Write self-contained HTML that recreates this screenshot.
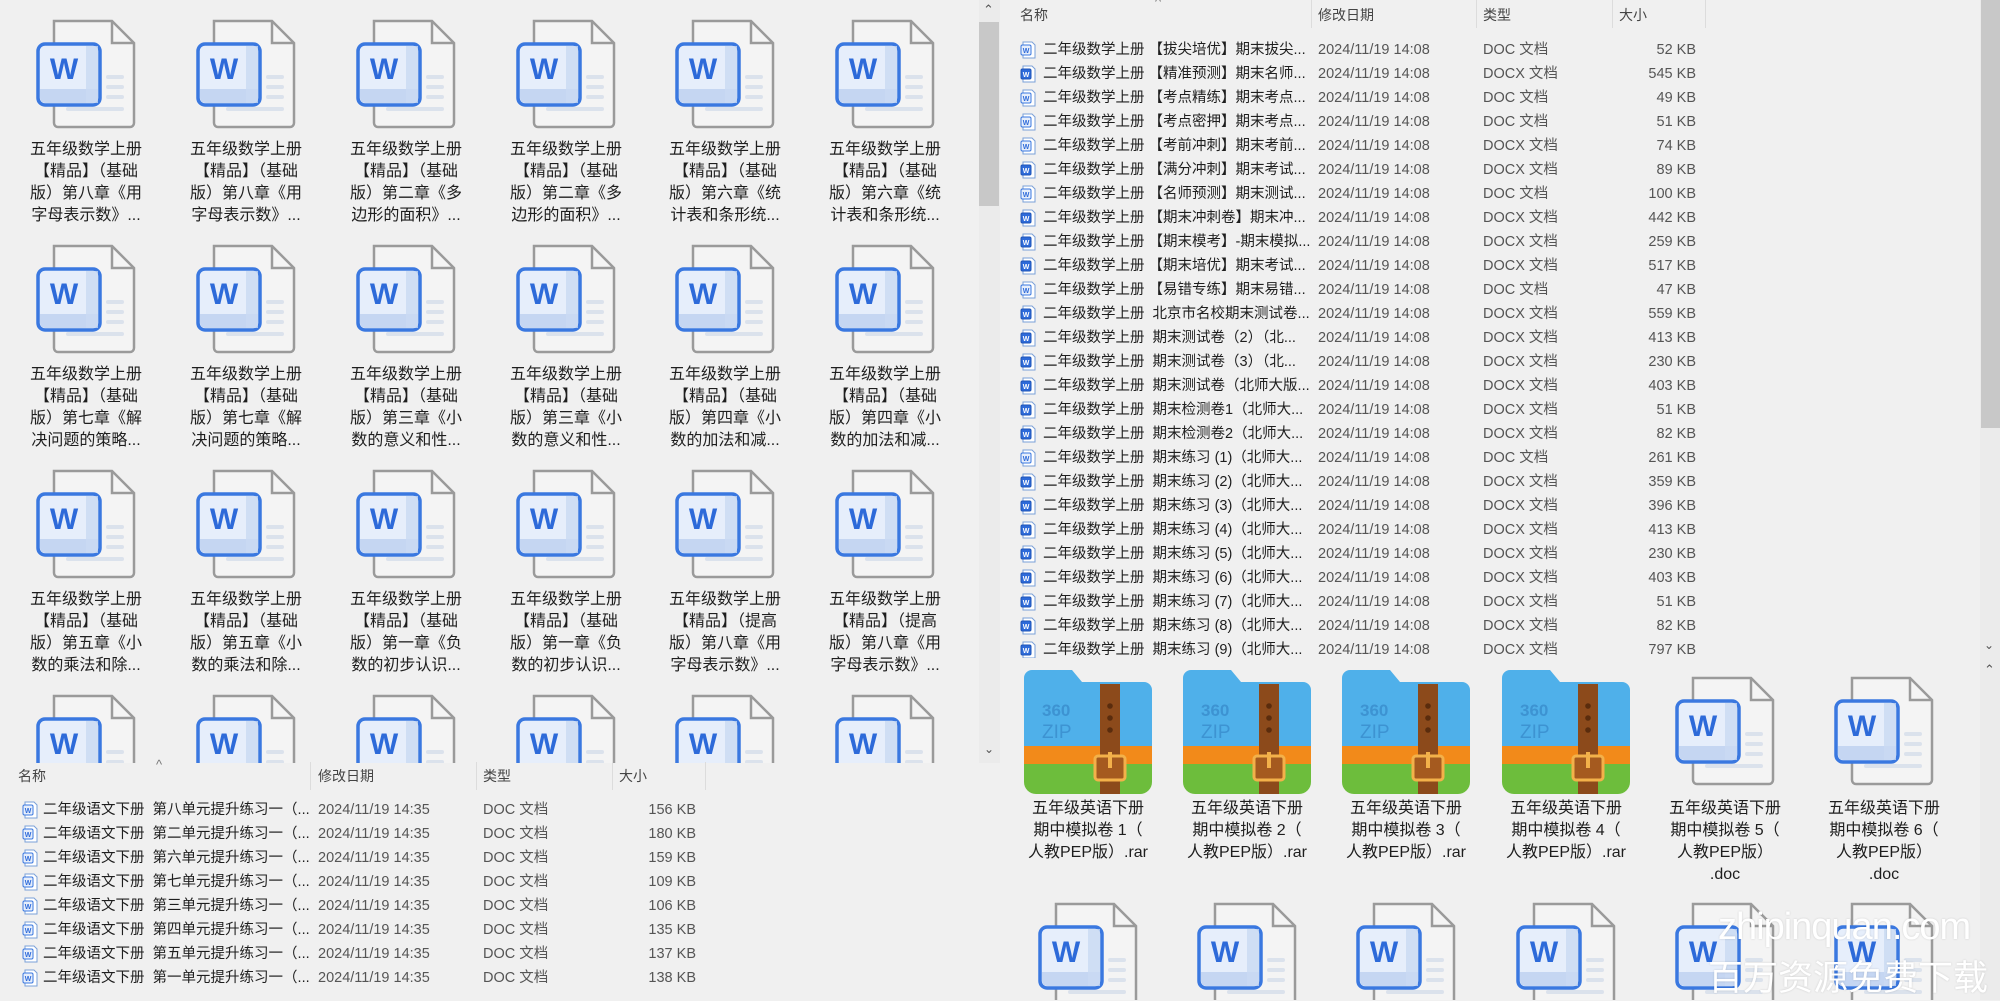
<!DOCTYPE html>
<html><head><meta charset="utf-8"><style>
*{margin:0;padding:0;box-sizing:border-box}
body{width:2000px;height:1000px;overflow:hidden;background:#f0f0f0;position:relative;font-family:"Liberation Sans","Noto Sans CJK SC",sans-serif;color:#1e1e1e}
.a{position:absolute}
.it{position:absolute;width:160px;text-align:center;font-size:16px;line-height:22px;color:#1e1e1e}
.it svg{display:block;margin:0 auto 10px auto}
.hdr{position:absolute;height:28px;font-size:14px;color:#444;line-height:28px}
.sep{position:absolute;top:0;width:1px;height:28px;background:#dcdcdc}
.row{position:absolute;height:24px;font-size:14.5px;line-height:24px;white-space:nowrap}
.row span{position:absolute;top:0}
.row .sz{text-align:right;width:80px}
.ic{position:absolute;top:3px;width:16px;height:18px}
.g{color:#555}
</style></head><body>
<svg width="0" height="0" style="position:absolute">
<defs>
<symbol id="w" viewBox="0 0 100 110">
<path d="M18 2H76L98 24V104a4 4 0 0 1-4 4H22a4 4 0 0 1-4-4Z" fill="#f4f4f4" stroke="#9a9a9a" stroke-width="2.5"/>
<path d="M76 2V24H98" fill="none" stroke="#9a9a9a" stroke-width="2.5"/>
<rect x="70" y="56" width="18" height="4" rx="2" fill="#dbe2ec"/>
<rect x="70" y="66" width="18" height="4" rx="2" fill="#dbe2ec"/>
<rect x="70" y="76" width="18" height="4" rx="2" fill="#dbe2ec"/>
<rect x="30" y="88" width="58" height="4" rx="2" fill="#dbe2ec"/>
<rect x="2" y="25" width="62" height="61" rx="7" fill="#e6eefb" stroke="#3a78e0" stroke-width="3.5"/>
<path d="M4 70H62V79a5 5 0 0 1-5 5H9a5 5 0 0 1-5-5Z" fill="#c5d6f2"/>
<rect x="50" y="27" width="12" height="57" fill="#c9d9f3" opacity=".8"/>
<text x="28" y="60" font-family="Liberation Sans" font-weight="bold" font-size="30" fill="#2d6ad9" text-anchor="middle">W</text>
</symbol>
<symbol id="z" viewBox="0 0 128 124">
<path d="M0 8a8 8 0 0 1 8-8H48L58 12H120a8 8 0 0 1 8 8V80H0Z" fill="#4fb0ea"/>
<rect x="0" y="76" width="128" height="20" fill="#f28a1a"/>
<path d="M0 94H128V112a12 12 0 0 1-12 12H12A12 12 0 0 1 0 112Z" fill="#6dbd3c"/>
<rect x="76" y="14" width="20" height="110" fill="#8c4a1b"/>
<circle cx="86" cy="36" r="2.8" fill="#5a2c0d"/><circle cx="86" cy="48" r="2.8" fill="#5a2c0d"/><circle cx="86" cy="60" r="2.8" fill="#5a2c0d"/>
<rect x="71" y="86" width="30" height="24" rx="3" fill="#a55a1f" stroke="#f3b14a" stroke-width="3"/>
<rect x="84" y="82" width="4" height="16" fill="#f3b14a"/>
<text x="18" y="46" font-family="Liberation Sans" font-size="17" font-weight="bold" fill="#3d93d2">360</text>
<text x="18" y="68" font-family="Liberation Sans" font-size="19" fill="#3d93d2">ZIP</text>
</symbol>
<symbol id="s" viewBox="0 0 16 18"><path d="M3 1H12L15 4V17H3Z" fill="#fff" stroke="#7aa0d8"/><rect x="1" y="4" width="10" height="10" rx="1.5" fill="#e6eefb" stroke="#3a78e0"/><text x="6" y="12" font-size="7" font-family="Liberation Sans" font-weight="bold" fill="#2d6ad9" text-anchor="middle">W</text></symbol>
<symbol id="sx" viewBox="0 0 16 18"><path d="M3 1H12L15 4V17H3Z" fill="#fff" stroke="#7aa0d8"/><rect x="1" y="4" width="10" height="10" rx="1.5" fill="#2d6ad9" stroke="#1f55b8"/><text x="6" y="12" font-size="7" font-family="Liberation Sans" font-weight="bold" fill="#fff" text-anchor="middle">W</text></symbol>
</defs></svg>

<!-- LEFT GRID -->
<div class="a" style="left:0;top:0;width:980px;height:763px;overflow:hidden">
<div class="it" style="left:6px;top:19px"><svg width="100" height="110"><use href="#w"/></svg>五年级数学上册<br>【精品】（基础<br>版）第八章《用<br>字母表示数》...</div>
<div class="it" style="left:166px;top:19px"><svg width="100" height="110"><use href="#w"/></svg>五年级数学上册<br>【精品】（基础<br>版）第八章《用<br>字母表示数》...</div>
<div class="it" style="left:326px;top:19px"><svg width="100" height="110"><use href="#w"/></svg>五年级数学上册<br>【精品】（基础<br>版）第二章《多<br>边形的面积》...</div>
<div class="it" style="left:486px;top:19px"><svg width="100" height="110"><use href="#w"/></svg>五年级数学上册<br>【精品】（基础<br>版）第二章《多<br>边形的面积》...</div>
<div class="it" style="left:645px;top:19px"><svg width="100" height="110"><use href="#w"/></svg>五年级数学上册<br>【精品】（基础<br>版）第六章《统<br>计表和条形统...</div>
<div class="it" style="left:805px;top:19px"><svg width="100" height="110"><use href="#w"/></svg>五年级数学上册<br>【精品】（基础<br>版）第六章《统<br>计表和条形统...</div>

<div class="it" style="left:6px;top:244px"><svg width="100" height="110"><use href="#w"/></svg>五年级数学上册<br>【精品】（基础<br>版）第七章《解<br>决问题的策略...</div>
<div class="it" style="left:166px;top:244px"><svg width="100" height="110"><use href="#w"/></svg>五年级数学上册<br>【精品】（基础<br>版）第七章《解<br>决问题的策略...</div>
<div class="it" style="left:326px;top:244px"><svg width="100" height="110"><use href="#w"/></svg>五年级数学上册<br>【精品】（基础<br>版）第三章《小<br>数的意义和性...</div>
<div class="it" style="left:486px;top:244px"><svg width="100" height="110"><use href="#w"/></svg>五年级数学上册<br>【精品】（基础<br>版）第三章《小<br>数的意义和性...</div>
<div class="it" style="left:645px;top:244px"><svg width="100" height="110"><use href="#w"/></svg>五年级数学上册<br>【精品】（基础<br>版）第四章《小<br>数的加法和减...</div>
<div class="it" style="left:805px;top:244px"><svg width="100" height="110"><use href="#w"/></svg>五年级数学上册<br>【精品】（基础<br>版）第四章《小<br>数的加法和减...</div>

<div class="it" style="left:6px;top:469px"><svg width="100" height="110"><use href="#w"/></svg>五年级数学上册<br>【精品】（基础<br>版）第五章《小<br>数的乘法和除...</div>
<div class="it" style="left:166px;top:469px"><svg width="100" height="110"><use href="#w"/></svg>五年级数学上册<br>【精品】（基础<br>版）第五章《小<br>数的乘法和除...</div>
<div class="it" style="left:326px;top:469px"><svg width="100" height="110"><use href="#w"/></svg>五年级数学上册<br>【精品】（基础<br>版）第一章《负<br>数的初步认识...</div>
<div class="it" style="left:486px;top:469px"><svg width="100" height="110"><use href="#w"/></svg>五年级数学上册<br>【精品】（基础<br>版）第一章《负<br>数的初步认识...</div>
<div class="it" style="left:645px;top:469px"><svg width="100" height="110"><use href="#w"/></svg>五年级数学上册<br>【精品】（提高<br>版）第八章《用<br>字母表示数》...</div>
<div class="it" style="left:805px;top:469px"><svg width="100" height="110"><use href="#w"/></svg>五年级数学上册<br>【精品】（提高<br>版）第八章《用<br>字母表示数》...</div>

<div class="it" style="left:6px;top:694px"><svg width="100" height="110"><use href="#w"/></svg></div>
<div class="it" style="left:166px;top:694px"><svg width="100" height="110"><use href="#w"/></svg></div>
<div class="it" style="left:326px;top:694px"><svg width="100" height="110"><use href="#w"/></svg></div>
<div class="it" style="left:486px;top:694px"><svg width="100" height="110"><use href="#w"/></svg></div>
<div class="it" style="left:645px;top:694px"><svg width="100" height="110"><use href="#w"/></svg></div>
<div class="it" style="left:805px;top:694px"><svg width="100" height="110"><use href="#w"/></svg></div>
</div>
<!-- left scrollbar -->
<div class="a" style="left:979px;top:0;width:21px;height:763px;background:#ebebeb"></div>
<div class="a" style="left:979px;top:22px;width:20px;height:184px;background:#c8c8c8"></div>
<div class="a" style="left:983px;top:2px;font-size:13px;color:#555">&#8963;</div>
<div class="a" style="left:984px;top:742px;font-size:12px;color:#555">&#8964;</div>

<!-- LEFT BOTTOM LIST -->
<div class="a" style="left:0;top:763px;width:1000px;height:237px;background:#f0f0f0">
<div class="a" style="left:156px;top:-6px;font-size:13px;color:#777">^</div>
<div class="hdr" style="left:18px;top:-1px">名称</div>
<div class="hdr" style="left:318px;top:-1px">修改日期</div>
<div class="hdr" style="left:483px;top:-1px">类型</div>
<div class="hdr" style="left:619px;top:-1px">大小</div>
<div class="sep" style="left:310px;top:-1px"></div><div class="sep" style="left:476px;top:-1px"></div><div class="sep" style="left:612px;top:-1px"></div><div class="sep" style="left:705px;top:-1px"></div>
</div>
<div class="row" style="left:0;top:798px;width:1000px"><svg class="ic" style="left:22px"><use href="#s"/></svg><span style="left:43px">二年级语文下册&nbsp; 第八单元提升练习一（...</span><span class="g" style="left:318px">2024/11/19 14:35</span><span class="g" style="left:483px">DOC 文档</span><span class="g sz" style="left:616px">156 KB</span></div>
<div class="row" style="left:0;top:822px;width:1000px"><svg class="ic" style="left:22px"><use href="#s"/></svg><span style="left:43px">二年级语文下册&nbsp; 第二单元提升练习一（...</span><span class="g" style="left:318px">2024/11/19 14:35</span><span class="g" style="left:483px">DOC 文档</span><span class="g sz" style="left:616px">180 KB</span></div>
<div class="row" style="left:0;top:846px;width:1000px"><svg class="ic" style="left:22px"><use href="#s"/></svg><span style="left:43px">二年级语文下册&nbsp; 第六单元提升练习一（...</span><span class="g" style="left:318px">2024/11/19 14:35</span><span class="g" style="left:483px">DOC 文档</span><span class="g sz" style="left:616px">159 KB</span></div>
<div class="row" style="left:0;top:870px;width:1000px"><svg class="ic" style="left:22px"><use href="#s"/></svg><span style="left:43px">二年级语文下册&nbsp; 第七单元提升练习一（...</span><span class="g" style="left:318px">2024/11/19 14:35</span><span class="g" style="left:483px">DOC 文档</span><span class="g sz" style="left:616px">109 KB</span></div>
<div class="row" style="left:0;top:894px;width:1000px"><svg class="ic" style="left:22px"><use href="#s"/></svg><span style="left:43px">二年级语文下册&nbsp; 第三单元提升练习一（...</span><span class="g" style="left:318px">2024/11/19 14:35</span><span class="g" style="left:483px">DOC 文档</span><span class="g sz" style="left:616px">106 KB</span></div>
<div class="row" style="left:0;top:918px;width:1000px"><svg class="ic" style="left:22px"><use href="#s"/></svg><span style="left:43px">二年级语文下册&nbsp; 第四单元提升练习一（...</span><span class="g" style="left:318px">2024/11/19 14:35</span><span class="g" style="left:483px">DOC 文档</span><span class="g sz" style="left:616px">135 KB</span></div>
<div class="row" style="left:0;top:942px;width:1000px"><svg class="ic" style="left:22px"><use href="#s"/></svg><span style="left:43px">二年级语文下册&nbsp; 第五单元提升练习一（...</span><span class="g" style="left:318px">2024/11/19 14:35</span><span class="g" style="left:483px">DOC 文档</span><span class="g sz" style="left:616px">137 KB</span></div>
<div class="row" style="left:0;top:966px;width:1000px"><svg class="ic" style="left:22px"><use href="#s"/></svg><span style="left:43px">二年级语文下册&nbsp; 第一单元提升练习一（...</span><span class="g" style="left:318px">2024/11/19 14:35</span><span class="g" style="left:483px">DOC 文档</span><span class="g sz" style="left:616px">138 KB</span></div>

<!-- RIGHT TOP LIST -->
<div class="a" style="left:1000px;top:0;width:1000px;height:658px;background:#f0f0f0"></div>
<div class="a" style="left:1155px;top:-6px;font-size:13px;color:#777">^</div>
<div class="hdr" style="left:1020px;top:1px">名称</div>
<div class="hdr" style="left:1318px;top:1px">修改日期</div>
<div class="hdr" style="left:1483px;top:1px">类型</div>
<div class="hdr" style="left:1619px;top:1px">大小</div>
<div class="sep" style="left:1311px;top:0"></div><div class="sep" style="left:1476px;top:0"></div><div class="sep" style="left:1612px;top:0"></div><div class="sep" style="left:1705px;top:0"></div>

<div class="row" style="left:1000px;top:38px;width:980px"><svg class="ic" style="left:20px"><use href="#s"/></svg><span style="left:43px">二年级数学上册 【拔尖培优】期末拔尖...</span><span class="g" style="left:318px">2024/11/19 14:08</span><span class="g" style="left:483px">DOC 文档</span><span class="g sz" style="left:616px">52 KB</span></div>
<div class="row" style="left:1000px;top:62px;width:980px"><svg class="ic" style="left:20px"><use href="#sx"/></svg><span style="left:43px">二年级数学上册 【精准预测】期末名师...</span><span class="g" style="left:318px">2024/11/19 14:08</span><span class="g" style="left:483px">DOCX 文档</span><span class="g sz" style="left:616px">545 KB</span></div>
<div class="row" style="left:1000px;top:86px;width:980px"><svg class="ic" style="left:20px"><use href="#s"/></svg><span style="left:43px">二年级数学上册 【考点精练】期末考点...</span><span class="g" style="left:318px">2024/11/19 14:08</span><span class="g" style="left:483px">DOC 文档</span><span class="g sz" style="left:616px">49 KB</span></div>
<div class="row" style="left:1000px;top:110px;width:980px"><svg class="ic" style="left:20px"><use href="#s"/></svg><span style="left:43px">二年级数学上册 【考点密押】期末考点...</span><span class="g" style="left:318px">2024/11/19 14:08</span><span class="g" style="left:483px">DOC 文档</span><span class="g sz" style="left:616px">51 KB</span></div>
<div class="row" style="left:1000px;top:134px;width:980px"><svg class="ic" style="left:20px"><use href="#s"/></svg><span style="left:43px">二年级数学上册 【考前冲刺】期末考前...</span><span class="g" style="left:318px">2024/11/19 14:08</span><span class="g" style="left:483px">DOCX 文档</span><span class="g sz" style="left:616px">74 KB</span></div>
<div class="row" style="left:1000px;top:158px;width:980px"><svg class="ic" style="left:20px"><use href="#sx"/></svg><span style="left:43px">二年级数学上册 【满分冲刺】期末考试...</span><span class="g" style="left:318px">2024/11/19 14:08</span><span class="g" style="left:483px">DOCX 文档</span><span class="g sz" style="left:616px">89 KB</span></div>
<div class="row" style="left:1000px;top:182px;width:980px"><svg class="ic" style="left:20px"><use href="#s"/></svg><span style="left:43px">二年级数学上册 【名师预测】期末测试...</span><span class="g" style="left:318px">2024/11/19 14:08</span><span class="g" style="left:483px">DOC 文档</span><span class="g sz" style="left:616px">100 KB</span></div>
<div class="row" style="left:1000px;top:206px;width:980px"><svg class="ic" style="left:20px"><use href="#sx"/></svg><span style="left:43px">二年级数学上册 【期末冲刺卷】期末冲...</span><span class="g" style="left:318px">2024/11/19 14:08</span><span class="g" style="left:483px">DOCX 文档</span><span class="g sz" style="left:616px">442 KB</span></div>
<div class="row" style="left:1000px;top:230px;width:980px"><svg class="ic" style="left:20px"><use href="#sx"/></svg><span style="left:43px">二年级数学上册 【期末模考】-期末模拟...</span><span class="g" style="left:318px">2024/11/19 14:08</span><span class="g" style="left:483px">DOCX 文档</span><span class="g sz" style="left:616px">259 KB</span></div>
<div class="row" style="left:1000px;top:254px;width:980px"><svg class="ic" style="left:20px"><use href="#sx"/></svg><span style="left:43px">二年级数学上册 【期末培优】期末考试...</span><span class="g" style="left:318px">2024/11/19 14:08</span><span class="g" style="left:483px">DOCX 文档</span><span class="g sz" style="left:616px">517 KB</span></div>
<div class="row" style="left:1000px;top:278px;width:980px"><svg class="ic" style="left:20px"><use href="#s"/></svg><span style="left:43px">二年级数学上册 【易错专练】期末易错...</span><span class="g" style="left:318px">2024/11/19 14:08</span><span class="g" style="left:483px">DOC 文档</span><span class="g sz" style="left:616px">47 KB</span></div>
<div class="row" style="left:1000px;top:302px;width:980px"><svg class="ic" style="left:20px"><use href="#sx"/></svg><span style="left:43px">二年级数学上册&nbsp; 北京市名校期末测试卷...</span><span class="g" style="left:318px">2024/11/19 14:08</span><span class="g" style="left:483px">DOCX 文档</span><span class="g sz" style="left:616px">559 KB</span></div>
<div class="row" style="left:1000px;top:326px;width:980px"><svg class="ic" style="left:20px"><use href="#sx"/></svg><span style="left:43px">二年级数学上册&nbsp; 期末测试卷（2）（北...</span><span class="g" style="left:318px">2024/11/19 14:08</span><span class="g" style="left:483px">DOCX 文档</span><span class="g sz" style="left:616px">413 KB</span></div>
<div class="row" style="left:1000px;top:350px;width:980px"><svg class="ic" style="left:20px"><use href="#sx"/></svg><span style="left:43px">二年级数学上册&nbsp; 期末测试卷（3）（北...</span><span class="g" style="left:318px">2024/11/19 14:08</span><span class="g" style="left:483px">DOCX 文档</span><span class="g sz" style="left:616px">230 KB</span></div>
<div class="row" style="left:1000px;top:374px;width:980px"><svg class="ic" style="left:20px"><use href="#sx"/></svg><span style="left:43px">二年级数学上册&nbsp; 期末测试卷（北师大版...</span><span class="g" style="left:318px">2024/11/19 14:08</span><span class="g" style="left:483px">DOCX 文档</span><span class="g sz" style="left:616px">403 KB</span></div>
<div class="row" style="left:1000px;top:398px;width:980px"><svg class="ic" style="left:20px"><use href="#sx"/></svg><span style="left:43px">二年级数学上册&nbsp; 期末检测卷1（北师大...</span><span class="g" style="left:318px">2024/11/19 14:08</span><span class="g" style="left:483px">DOCX 文档</span><span class="g sz" style="left:616px">51 KB</span></div>
<div class="row" style="left:1000px;top:422px;width:980px"><svg class="ic" style="left:20px"><use href="#sx"/></svg><span style="left:43px">二年级数学上册&nbsp; 期末检测卷2（北师大...</span><span class="g" style="left:318px">2024/11/19 14:08</span><span class="g" style="left:483px">DOCX 文档</span><span class="g sz" style="left:616px">82 KB</span></div>
<div class="row" style="left:1000px;top:446px;width:980px"><svg class="ic" style="left:20px"><use href="#s"/></svg><span style="left:43px">二年级数学上册&nbsp; 期末练习 (1)（北师大...</span><span class="g" style="left:318px">2024/11/19 14:08</span><span class="g" style="left:483px">DOC 文档</span><span class="g sz" style="left:616px">261 KB</span></div>
<div class="row" style="left:1000px;top:470px;width:980px"><svg class="ic" style="left:20px"><use href="#sx"/></svg><span style="left:43px">二年级数学上册&nbsp; 期末练习 (2)（北师大...</span><span class="g" style="left:318px">2024/11/19 14:08</span><span class="g" style="left:483px">DOCX 文档</span><span class="g sz" style="left:616px">359 KB</span></div>
<div class="row" style="left:1000px;top:494px;width:980px"><svg class="ic" style="left:20px"><use href="#sx"/></svg><span style="left:43px">二年级数学上册&nbsp; 期末练习 (3)（北师大...</span><span class="g" style="left:318px">2024/11/19 14:08</span><span class="g" style="left:483px">DOCX 文档</span><span class="g sz" style="left:616px">396 KB</span></div>
<div class="row" style="left:1000px;top:518px;width:980px"><svg class="ic" style="left:20px"><use href="#sx"/></svg><span style="left:43px">二年级数学上册&nbsp; 期末练习 (4)（北师大...</span><span class="g" style="left:318px">2024/11/19 14:08</span><span class="g" style="left:483px">DOCX 文档</span><span class="g sz" style="left:616px">413 KB</span></div>
<div class="row" style="left:1000px;top:542px;width:980px"><svg class="ic" style="left:20px"><use href="#sx"/></svg><span style="left:43px">二年级数学上册&nbsp; 期末练习 (5)（北师大...</span><span class="g" style="left:318px">2024/11/19 14:08</span><span class="g" style="left:483px">DOCX 文档</span><span class="g sz" style="left:616px">230 KB</span></div>
<div class="row" style="left:1000px;top:566px;width:980px"><svg class="ic" style="left:20px"><use href="#sx"/></svg><span style="left:43px">二年级数学上册&nbsp; 期末练习 (6)（北师大...</span><span class="g" style="left:318px">2024/11/19 14:08</span><span class="g" style="left:483px">DOCX 文档</span><span class="g sz" style="left:616px">403 KB</span></div>
<div class="row" style="left:1000px;top:590px;width:980px"><svg class="ic" style="left:20px"><use href="#sx"/></svg><span style="left:43px">二年级数学上册&nbsp; 期末练习 (7)（北师大...</span><span class="g" style="left:318px">2024/11/19 14:08</span><span class="g" style="left:483px">DOCX 文档</span><span class="g sz" style="left:616px">51 KB</span></div>
<div class="row" style="left:1000px;top:614px;width:980px"><svg class="ic" style="left:20px"><use href="#sx"/></svg><span style="left:43px">二年级数学上册&nbsp; 期末练习 (8)（北师大...</span><span class="g" style="left:318px">2024/11/19 14:08</span><span class="g" style="left:483px">DOCX 文档</span><span class="g sz" style="left:616px">82 KB</span></div>
<div class="row" style="left:1000px;top:638px;width:980px;height:20px;overflow:hidden"><svg class="ic" style="left:20px"><use href="#sx"/></svg><span style="left:43px">二年级数学上册&nbsp; 期末练习 (9)（北师大...</span><span class="g" style="left:318px">2024/11/19 14:08</span><span class="g" style="left:483px">DOCX 文档</span><span class="g sz" style="left:616px">797 KB</span></div>
<!-- right top scrollbar -->
<div class="a" style="left:1980px;top:0;width:20px;height:658px;background:#ebebeb"></div>
<div class="a" style="left:1981px;top:0;width:19px;height:428px;background:#c8c8c8"></div>
<div class="a" style="left:1984px;top:638px;font-size:12px;color:#555">&#8964;</div>

<!-- RIGHT BOTTOM GRID -->
<div class="a" style="left:1000px;top:658px;width:980px;height:342px;overflow:hidden">
<div class="it" style="left:8px;top:12px"><svg width="128" height="124" style="margin-bottom:4px"><use href="#z"/></svg>五年级英语下册<br>期中模拟卷 1（<br>人教PEP版）.rar</div>
<div class="it" style="left:167px;top:12px"><svg width="128" height="124" style="margin-bottom:4px"><use href="#z"/></svg>五年级英语下册<br>期中模拟卷 2（<br>人教PEP版）.rar</div>
<div class="it" style="left:326px;top:12px"><svg width="128" height="124" style="margin-bottom:4px"><use href="#z"/></svg>五年级英语下册<br>期中模拟卷 3（<br>人教PEP版）.rar</div>
<div class="it" style="left:486px;top:12px"><svg width="128" height="124" style="margin-bottom:4px"><use href="#z"/></svg>五年级英语下册<br>期中模拟卷 4（<br>人教PEP版）.rar</div>
<div class="it" style="left:645px;top:18px"><svg width="100" height="110" style="margin-bottom:12px"><use href="#w"/></svg>五年级英语下册<br>期中模拟卷 5（<br>人教PEP版）<br>.doc</div>
<div class="it" style="left:804px;top:18px"><svg width="100" height="110" style="margin-bottom:12px"><use href="#w"/></svg>五年级英语下册<br>期中模拟卷 6（<br>人教PEP版）<br>.doc</div>
<div class="it" style="left:8px;top:244px"><svg width="100" height="110"><use href="#w"/></svg></div>
<div class="it" style="left:167px;top:244px"><svg width="100" height="110"><use href="#w"/></svg></div>
<div class="it" style="left:326px;top:244px"><svg width="100" height="110"><use href="#w"/></svg></div>
<div class="it" style="left:486px;top:244px"><svg width="100" height="110"><use href="#w"/></svg></div>
<div class="it" style="left:645px;top:244px"><svg width="100" height="110"><use href="#w"/></svg></div>
<div class="it" style="left:804px;top:244px"><svg width="100" height="110"><use href="#w"/></svg></div>
</div>
<div class="a" style="left:1980px;top:658px;width:20px;height:342px;background:#ebebeb"></div>
<div class="a" style="left:1984px;top:662px;font-size:13px;color:#555">&#8963;</div>

<!-- watermark -->
<div class="a" style="left:1718px;top:906px;font-size:38px;color:#fff;font-family:'Liberation Sans',sans-serif;text-shadow:0 0 2px rgba(0,0,0,.15);letter-spacing:-1px">zhipinquan.com</div>
<div class="a" style="left:1708px;top:950px;font-size:35px;color:#fff;text-shadow:0 0 2px rgba(0,0,0,.15)">百万资源免费下载</div>
</body></html>
